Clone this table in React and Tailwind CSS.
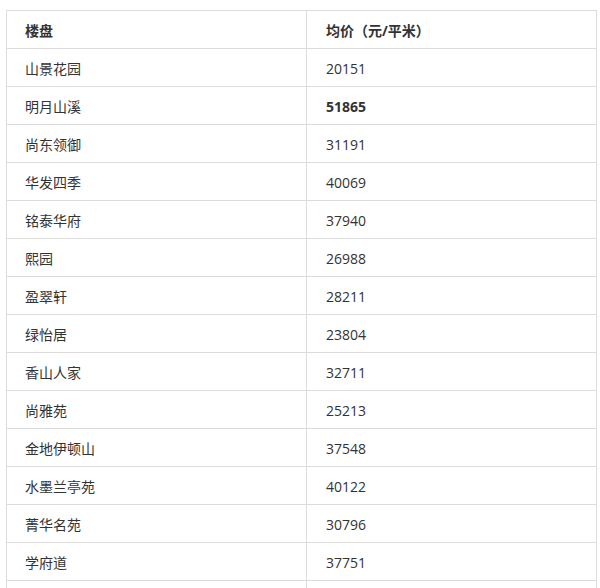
export default function App() {
  const rows = [
    ["山景花园", "20151"],
    ["明月山溪", "51865", true],
    ["尚东领御", "31191"],
    ["华发四季", "40069"],
    ["铭泰华府", "37940"],
    ["熙园", "26988"],
    ["盈翠轩", "28211"],
    ["绿怡居", "23804"],
    ["香山人家", "32711"],
    ["尚雅苑", "25213"],
    ["金地伊顿山", "37548"],
    ["水墨兰亭苑", "40122"],
    ["菁华名苑", "30796"],
    ["学府道", "37751"],
    ["", ""],
  ];
  const font = { fontFamily: '"Open Sans", "Noto Sans CJK SC", sans-serif' };
  return (
    <div className="w-[600px] h-[588px] overflow-hidden bg-white pt-[10px] pl-[6px]" style={font}>
      <div className="w-[591px] border-t border-l border-[#dcdcdc] text-[14px] text-[#333]">
        <div className="grid grid-cols-[300px_290px] h-[38px] border-b border-[#dcdcdc] font-bold">
          <div className="border-r border-[#dcdcdc] pl-[18px] pt-[9px] leading-[22px]">楼盘</div>
          <div className="border-r border-[#dcdcdc] pl-[19px] pt-[9px] leading-[22px]">均价（元/平米）</div>
        </div>
        {rows.map((r, i) => (
          <div key={i} className="grid grid-cols-[300px_290px] h-[38px] border-b border-[#dcdcdc]">
            <div className="border-r border-[#dcdcdc] pl-[18px] pt-[9px] leading-[22px]">{r[0]}</div>
            <div className={"border-r border-[#dcdcdc] pl-[19px] pt-[9px] leading-[22px]" + (r[2] ? " font-bold" : "")}>{r[1]}</div>
          </div>
        ))}
      </div>
    </div>
  );
}
